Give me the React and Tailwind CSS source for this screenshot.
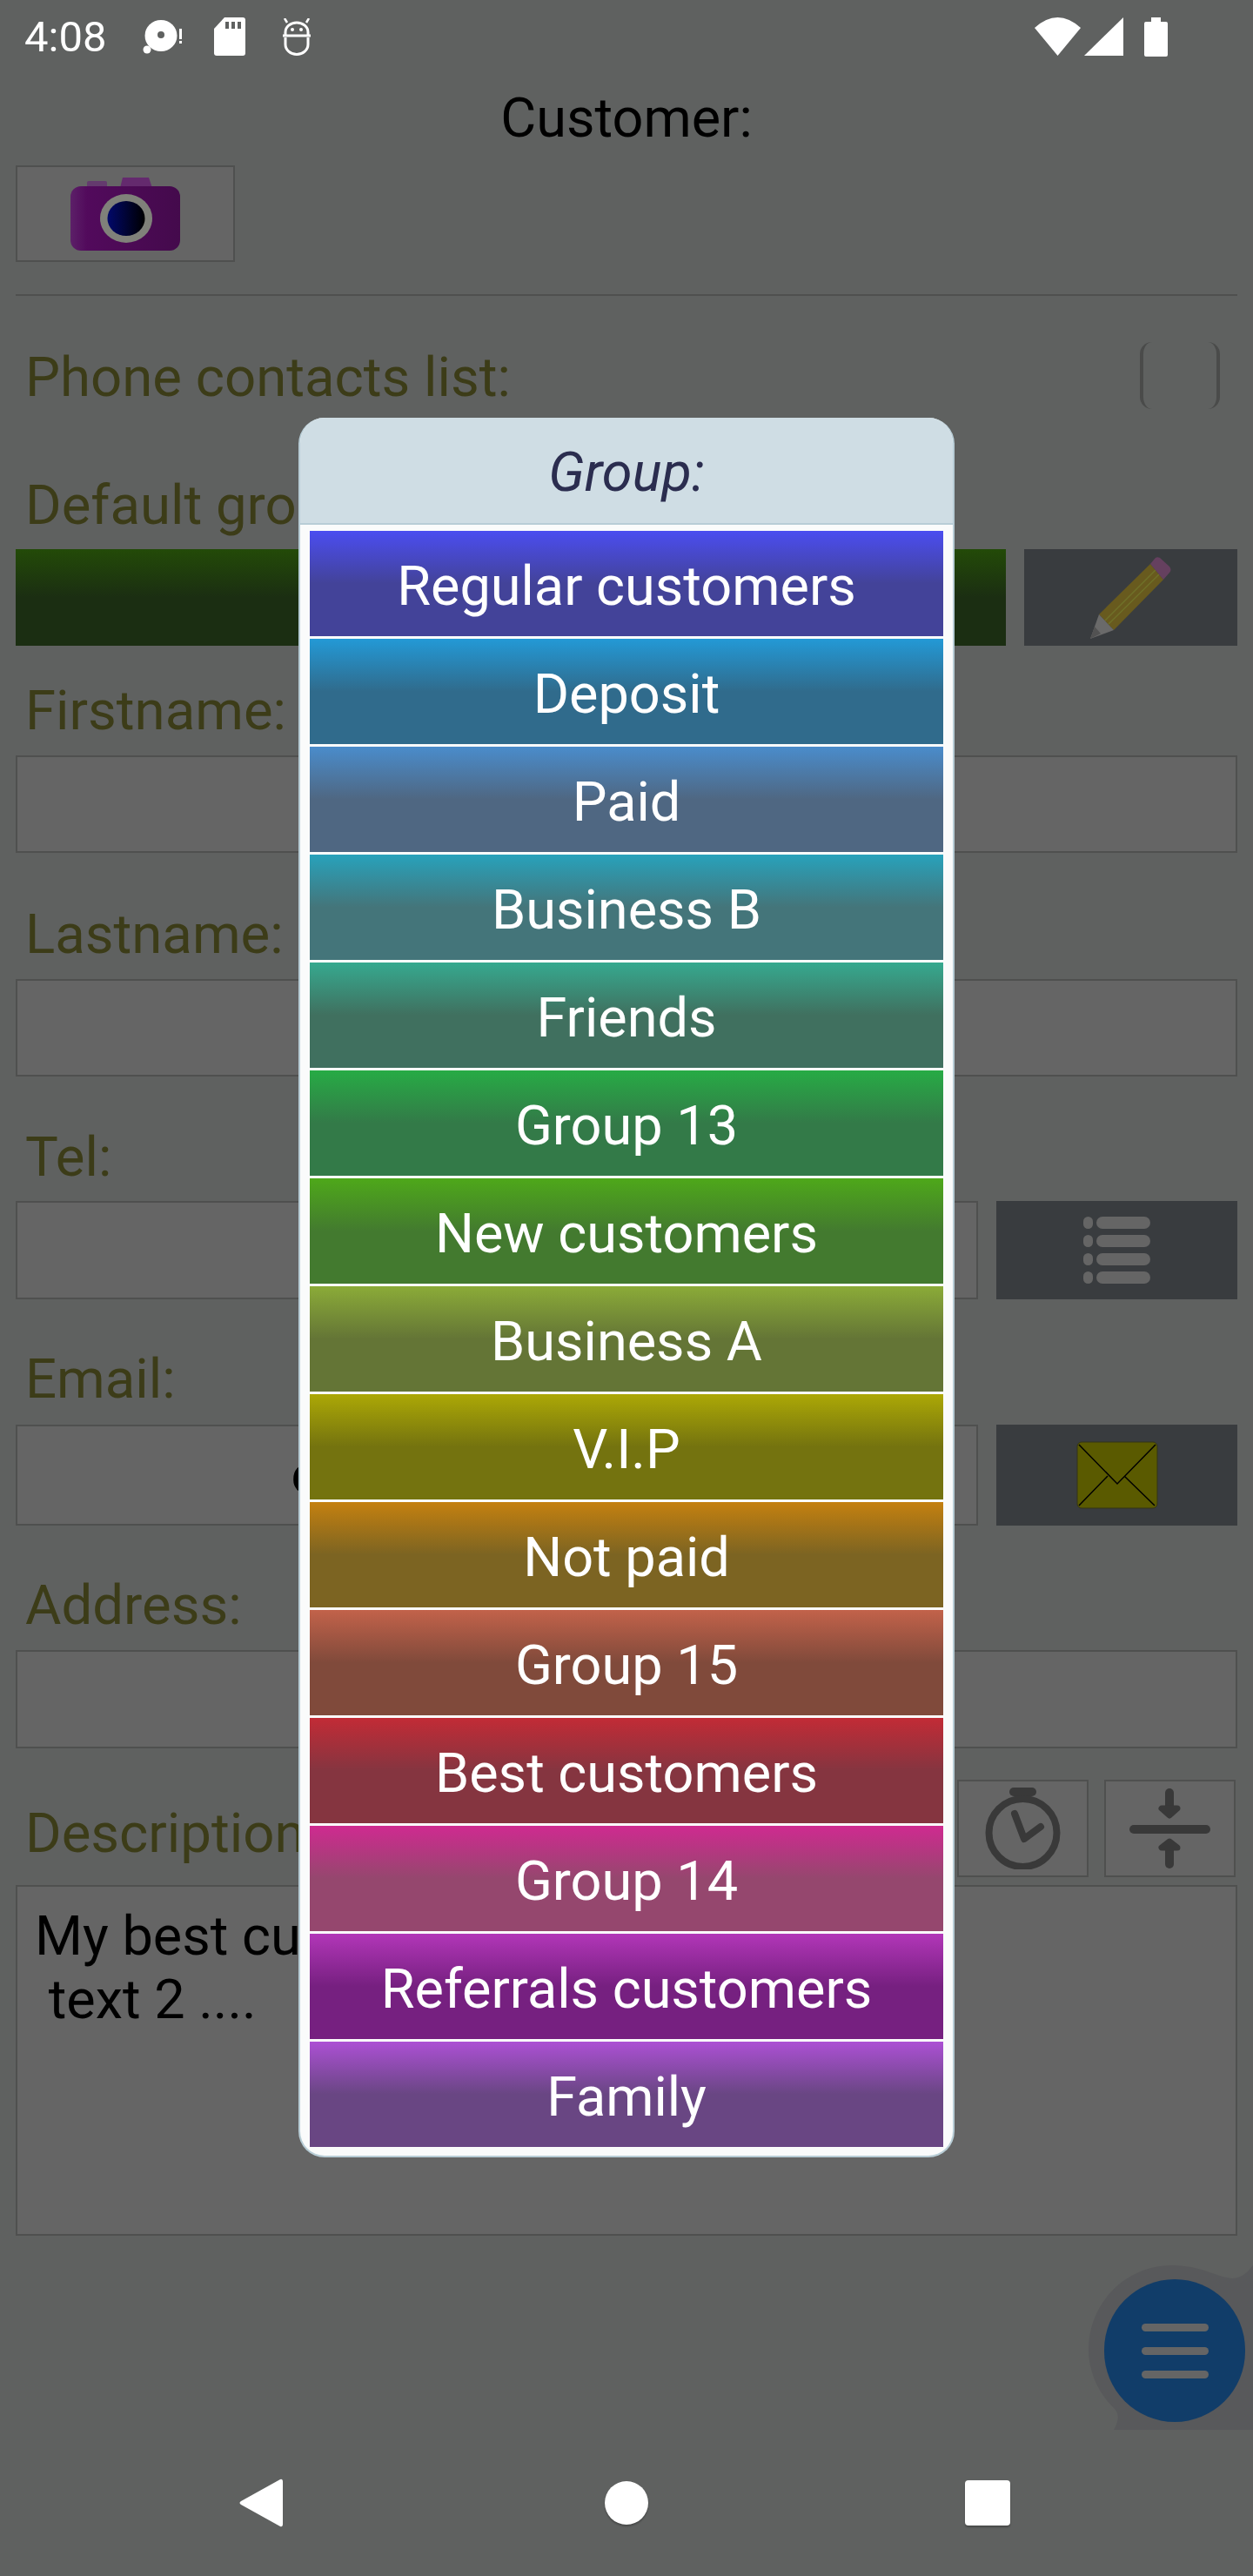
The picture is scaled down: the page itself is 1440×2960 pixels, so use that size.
const groups = [
  { name: "Regular customers", cls: "bg-[linear-gradient(#4b4df0,#434399_50%)]" },
  { name: "Deposit", cls: "bg-[linear-gradient(#2399d6,#306b8c_50%)]" },
  { name: "Paid", cls: "bg-[linear-gradient(#4a8ccb,#4f6782_50%)]" },
  { name: "Business B", cls: "bg-[linear-gradient(#28a2bb,#44757a_50%)]" },
  { name: "Friends", cls: "bg-[linear-gradient(#36a98f,#40705f_50%)]" },
  { name: "Group 13", cls: "bg-[linear-gradient(#27ab45,#337a48_50%)]" },
  { name: "New customers", cls: "bg-[linear-gradient(#4ea81a,#437a2f_50%)]" },
  { name: "Business A", cls: "bg-[linear-gradient(#8bab38,#647536_50%)]" },
  { name: "V.I.P", cls: "bg-[linear-gradient(#aca806,#74730f_50%)]" },
  { name: "Not paid", cls: "bg-[linear-gradient(#c48010,#7c6422_50%)]" },
  { name: "Group 15", cls: "bg-[linear-gradient(#c2624a,#804a3b_50%)]" },
  { name: "Best customers", cls: "bg-[linear-gradient(#c22b36,#853540_50%)]" },
  { name: "Group 14", cls: "bg-[linear-gradient(#cf2a90,#95476e_50%)]" },
  { name: "Referrals customers", cls: "bg-[linear-gradient(#b236b8,#762080_50%)]" },
  { name: "Family", cls: "bg-[linear-gradient(#ac50d4,#694683_50%)]" },
];

function Label({ children, className = "" }) {
  return <div className={"pl-[29px] text-[63.5px] leading-[74px] text-[#3c3c18] " + className}>{children}</div>;
}

function Field({ className = "", children }) {
  return <div className={"border-2 border-[#4f504f] bg-[#656565] " + className}>{children}</div>;
}

function StatusBar() {
  return (
    <div className="flex h-[88px] items-center justify-between pr-[98px] pb-[4px] pl-[28px]">
      <div className="flex items-center">
        <span className="w-[94px] text-[49px] leading-none whitespace-nowrap text-white">4:08</span>
        <svg viewBox="0 0 46 39" className="ml-[42px] h-[39px] w-[46px] fill-white">
          <ellipse cx="21" cy="18" rx="18.500" ry="18" />
          <circle cx="21" cy="17" r="4" fill="#5f6160" />
          <circle cx="5" cy="34" r="4.500" />
          <rect x="42" y="10" width="3" height="12" />
          <rect x="42" y="24" width="3" height="3" />
        </svg>
        <svg viewBox="0 0 36 44" className="ml-[36px] h-[44px] w-[36px] fill-white">
          <path d="M12 0H33a3 3 0 0 1 3 3V41a3 3 0 0 1-3 3H3a3 3 0 0 1-3-3V13Z" />
          <rect x="13" y="5" width="4" height="8" fill="#5f6160" />
          <rect x="20" y="5" width="4" height="8" fill="#5f6160" />
          <rect x="27" y="5" width="4" height="8" fill="#5f6160" />
        </svg>
        <svg viewBox="0 0 32 43" className="ml-[43px] h-[43px] w-[32px] fill-none stroke-white" strokeWidth="3">
          <path d="M3 19V16a13 11 0 0 1 26 0V19" />
          <path d="M0 20H32" />
          <path d="M3 22V30a13 11.500 0 0 0 26 0V22" />
          <path d="M2 0l3 5M30 0l-3 5" strokeWidth="2.500" />
          <circle cx="11" cy="13" r="2" fill="white" stroke="none" />
          <circle cx="21" cy="13" r="2" fill="white" stroke="none" />
        </svg>
      </div>
      <div className="flex items-center">
        <svg viewBox="0 0 53 44" className="h-[44px] w-[53px] fill-white">
          <path d="M0 12Q26.500 -12 53 12L26.500 44Z" />
        </svg>
        <svg viewBox="0 0 45 44" className="ml-[4px] h-[44px] w-[45px] fill-white">
          <path d="M45 0V44H0Z" />
        </svg>
        <svg viewBox="0 0 27 45" className="ml-[24px] h-[45px] w-[27px] fill-white">
          <path d="M8 0H19V5H25a2 2 0 0 1 2 2V43a2 2 0 0 1-2 2H2a2 2 0 0 1-2-2V7a2 2 0 0 1 2-2H8Z" />
        </svg>
      </div>
    </div>
  );
}

function Background() {
  return (
    <div className="h-[2960px] bg-[#5f6160] font-['Roboto',sans-serif]">
      <StatusBar />
      <div className="mt-[11px] text-center text-[63px] leading-[74px] text-black">Customer:</div>
      <div className="mt-[17px] pl-[18px]">
        <div className="flex h-[111px] w-[252px] items-center justify-center border-2 border-[#4f504f] bg-[#656565]">
          <svg viewBox="0 0 126 84" className="h-[84px] w-[126px]">
            <defs>
              <linearGradient id="lens" x1="0" x2="1" y1="0" y2="0">
                <stop offset="0" stopColor="#01086a" />
                <stop offset="1" stopColor="#000000" />
              </linearGradient>
              <linearGradient id="body" x1="0" x2="1" y1="0" y2="0">
                <stop offset="0" stopColor="#5c2068" />
                <stop offset="0.15" stopColor="#520a5c" />
                <stop offset="1" stopColor="#440a4c" />
              </linearGradient>
            </defs>
            <rect x="19" y="4" width="23" height="10" rx="2" fill="#643a6e" />
            <path d="M57 12L60 0H90L94 12Z" fill="#642a6e" />
            <rect x="0" y="10" width="126" height="74" rx="12" fill="url(#body)" />
            <ellipse cx="64" cy="47" rx="30" ry="28" fill="#80817a" />
            <ellipse cx="64" cy="47" rx="21.500" ry="20" fill="url(#lens)" />
          </svg>
        </div>
      </div>
      <div className="mx-[18px] mt-[37px] h-[2px] bg-[#4f504f]" />
      <div className="mt-[53px] flex items-start justify-between pr-[38px]">
        <Label className="mt-[4px]">Phone contacts list:</Label>
        <div className="flex h-[77px] w-[92px] justify-between">
          <div className="w-[14px] rounded-l-[14px] border-l-[4px] border-[#4a4b4a]" />
          <div className="w-[14px] rounded-r-[14px] border-r-[4px] border-[#4a4b4a]" />
        </div>
      </div>
      <Label className="mt-[73px]">Default group:</Label>
      <div className="mt-[13px] flex gap-[21px] px-[18px]">
        <div className="h-[111px] flex-1 bg-[linear-gradient(#234a08,#1b2e12_50%)]" />
        <div className="flex h-[111px] w-[245px] items-center justify-center bg-[#393c3f]">
          <svg viewBox="0 0 93 94" className="h-[94px] w-[93px]">
            <path d="M10 66L69 8L84 26L27 84Z" fill="#685a1e" />
            <path d="M17 73L75 15M21 77L79 20" stroke="#6f7028" strokeWidth="1.500" fill="none" />
            <path d="M10 66L27 84L0 94Z" fill="#6a6a6a" />
            <path d="M5 80L12 88L0 94Z" fill="#525252" />
            <path d="M69 8L74 2Q76 -1 80 1L91 11Q94 15 91 18L84 26Z" fill="#65405f" />
          </svg>
        </div>
      </div>
      <Label className="mt-[38px]">Firstname:</Label>
      <div className="mt-[14px] px-[18px]"><Field className="h-[112px]" /></div>
      <Label className="mt-[57px]">Lastname:</Label>
      <div className="mt-[14px] px-[18px]"><Field className="h-[112px]" /></div>
      <Label className="mt-[56px]">Tel:</Label>
      <div className="mt-[13px] flex gap-[21px] px-[18px]">
        <Field className="h-[113px] flex-1" />
        <div className="flex h-[113px] w-[277px] flex-col items-center justify-center gap-[7px] bg-[#393c3f]">
          {[0, 1, 2, 3].map((i) => (
            <div key={i} className="flex gap-[4px]">
              <div className="h-[14px] w-[11px] rounded-full bg-[#656565]" />
              <div className="h-[14px] w-[62px] rounded-full bg-[#656565]" />
            </div>
          ))}
        </div>
      </div>
      <Label className="mt-[55px]">Email:</Label>
      <div className="mt-[15px] flex gap-[21px] px-[18px]">
        <Field className="flex h-[116px] flex-1 items-center pl-[315px] text-[63px] font-bold text-black">e</Field>
        <div className="flex h-[116px] w-[277px] items-center justify-center bg-[#393c3f]">
          <svg viewBox="0 0 94 78" className="h-[78px] w-[94px]">
            <rect x="1" y="1" width="92" height="76" rx="5" fill="#5a5a00" stroke="#333318" strokeWidth="1" />
            <path d="M3 4L47 49L91 4M36 40L3 74M55 40L90 74" fill="none" stroke="#000" strokeWidth="1.500" />
          </svg>
        </div>
      </div>
      <Label className="mt-[55px]">Address:</Label>
      <div className="mt-[14px] px-[18px]"><Field className="h-[113px]" /></div>
      <div className="mt-[36px] flex items-start gap-[18px] pr-[20px]">
        <Label className="flex-1 pt-[25px]">Description:</Label>
        <div className="flex h-[112px] w-[151px] items-center justify-center border-2 border-[#4f504f] bg-[#656565]">
          <svg viewBox="0 0 87 94" className="h-[94px] w-[87px] fill-none stroke-[#393939]" strokeLinecap="round">
            <path d="M33 5H54" strokeWidth="10" />
            <circle cx="43.500" cy="52" r="39" strokeWidth="8" />
            <path d="M34 30L45 59L64 45" strokeWidth="8" strokeLinejoin="round" />
          </svg>
        </div>
        <div className="flex h-[112px] w-[151px] items-center justify-center border-2 border-[#4f504f] bg-[#656565]">
          <svg viewBox="0 0 93 92" className="h-[92px] w-[93px] fill-[#393939] stroke-[#393939]" strokeLinecap="round" strokeLinejoin="round">
            <path d="M46 5V25" strokeWidth="10" fill="none" />
            <path d="M37 23H55L46 31Z" strokeWidth="7" />
            <path d="M5 47H88" strokeWidth="10" fill="none" />
            <path d="M46 68V87" strokeWidth="10" fill="none" />
            <path d="M37 68H55L46 61Z" strokeWidth="7" />
          </svg>
        </div>
      </div>
      <div className="mt-[9px] px-[18px]">
        <div className="h-[403px] border-2 border-[#4f504f] bg-[#656565] pt-[20px] pl-[20px] text-[63px] leading-[73px] whitespace-pre text-black">
          {"My best customer\n text 2 ...."}
        </div>
      </div>
    </div>
  );
}

function Fab() {
  return (
    <div className="absolute top-[2603px] left-[1251px] h-[189px] w-[189px]">
      <svg viewBox="0 0 189 189" className="absolute inset-0 h-[189px] w-[189px] fill-[#58595b]">
        <path d="M189 0Q178 15 166 15C150 15 130 0 96 0C43 0 0 43 0 97C0 125 14 150 30 165Q38 174 29 189H189Z" />
      </svg>
      <div className="absolute top-[16px] left-[18px] flex h-[164px] w-[162px] flex-col items-center justify-center gap-[18px] rounded-full bg-[#113d69]">
        <div className="h-[9px] w-[77px] rounded-full bg-[#656565]" />
        <div className="h-[9px] w-[77px] rounded-full bg-[#656565]" />
        <div className="h-[9px] w-[77px] rounded-full bg-[#656565]" />
      </div>
    </div>
  );
}

function NavBar() {
  return (
    <div className="absolute top-[2846px] left-0 flex h-[60px] w-full items-center justify-center">
      <svg viewBox="0 0 50 56" className="absolute left-[275px] h-[56px] w-[50px] fill-white">
        <path d="M47 1Q50 0 50 4V52Q50 56 47 55L2 30Q-1 28 2 26Z" />
      </svg>
      <div className="h-[50px] w-[50px] rounded-full bg-white shadow-[0_2px_2px_rgba(0,0,0,0.25)]" />
      <div className="absolute left-[1109px] h-[52px] w-[52px] rounded-[4px] bg-white shadow-[0_2px_2px_rgba(0,0,0,0.25)]" />
    </div>
  );
}

function GroupDialog() {
  return (
    <div className="absolute top-[480px] left-[343px] flex h-[1999px] w-[754px] flex-col overflow-hidden rounded-[30px] border-2 border-t-0 border-[#b8cdd6] bg-[#fafbfb] font-['Roboto',sans-serif]">
      <div className="flex h-[123px] shrink-0 items-center justify-center border-b-2 border-[#b8cdd6] bg-[#cfdde4] pt-[5px] text-[63px] text-[#2b2d4f] italic">
        Group:
      </div>
      <div className="flex flex-col gap-[3px] px-[11px] pt-[7px]">
        {groups.map((g) => (
          <div key={g.name} className={"flex h-[121px] shrink-0 items-center justify-center pt-[8px] text-[63px] text-white " + g.cls}>
            {g.name}
          </div>
        ))}
      </div>
    </div>
  );
}

export default function App() {
  return (
    <div className="relative h-[2960px] w-[1440px] overflow-hidden">
      <Background />
      <Fab />
      <NavBar />
      <GroupDialog />
    </div>
  );
}
